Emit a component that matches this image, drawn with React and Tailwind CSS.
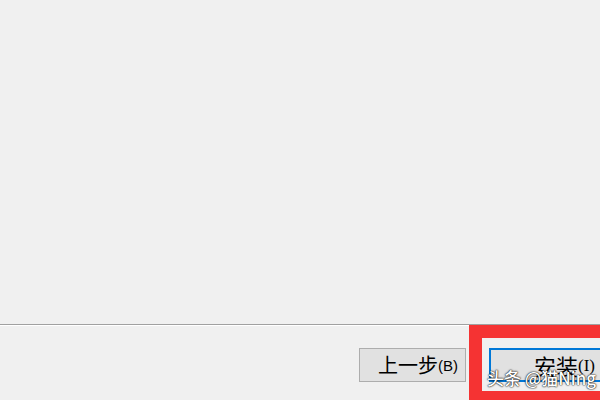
import React from "react";

export default function App() {
  return (
    <main
      className="relative w-[600px] h-[400px] overflow-hidden bg-[#f0f0f0] flex flex-col"
      style={{ fontFamily: '"Noto Sans CJK SC", "Liberation Sans", sans-serif' }}
    >
      <div className="h-[324px]" />
      <div className="h-[1px] bg-[#a0a0a0]" />
      <div className="h-[1px] bg-white" />

      <div className="flex pt-[22px] pl-[359px] gap-[23px]">
        <button className="w-[107px] h-[34px] shrink-0 flex items-center pl-[18px] bg-[#e1e1e1] border border-[#adadad] text-black">
          <span className="text-[20px] leading-none">上一步</span>
          <span className="text-[15px] leading-none font-['Liberation_Sans']">(B)</span>
        </button>
        <button className="w-[150px] h-[34px] shrink-0 flex items-center pl-[43px] bg-[#e1e1e1] border-2 border-[#0078d7] text-black">
          <span className="text-[22px] leading-none">安装</span>
          <span className="text-[17px] leading-none font-['Liberation_Serif']">(I)</span>
        </button>
      </div>

      <div className="absolute left-[469px] top-[325px] w-[131px] h-[75px] border-[13px] border-b-[9px] border-r-0 border-[#f53333]" />

      <div className="absolute left-[487px] top-[369px] text-white text-[17px] font-medium leading-none [text-shadow:0_0_2px_rgba(0,0,0,1),0_0_1px_rgba(0,0,0,1)]">
        头条 @猫Ning
      </div>
    </main>
  );
}
